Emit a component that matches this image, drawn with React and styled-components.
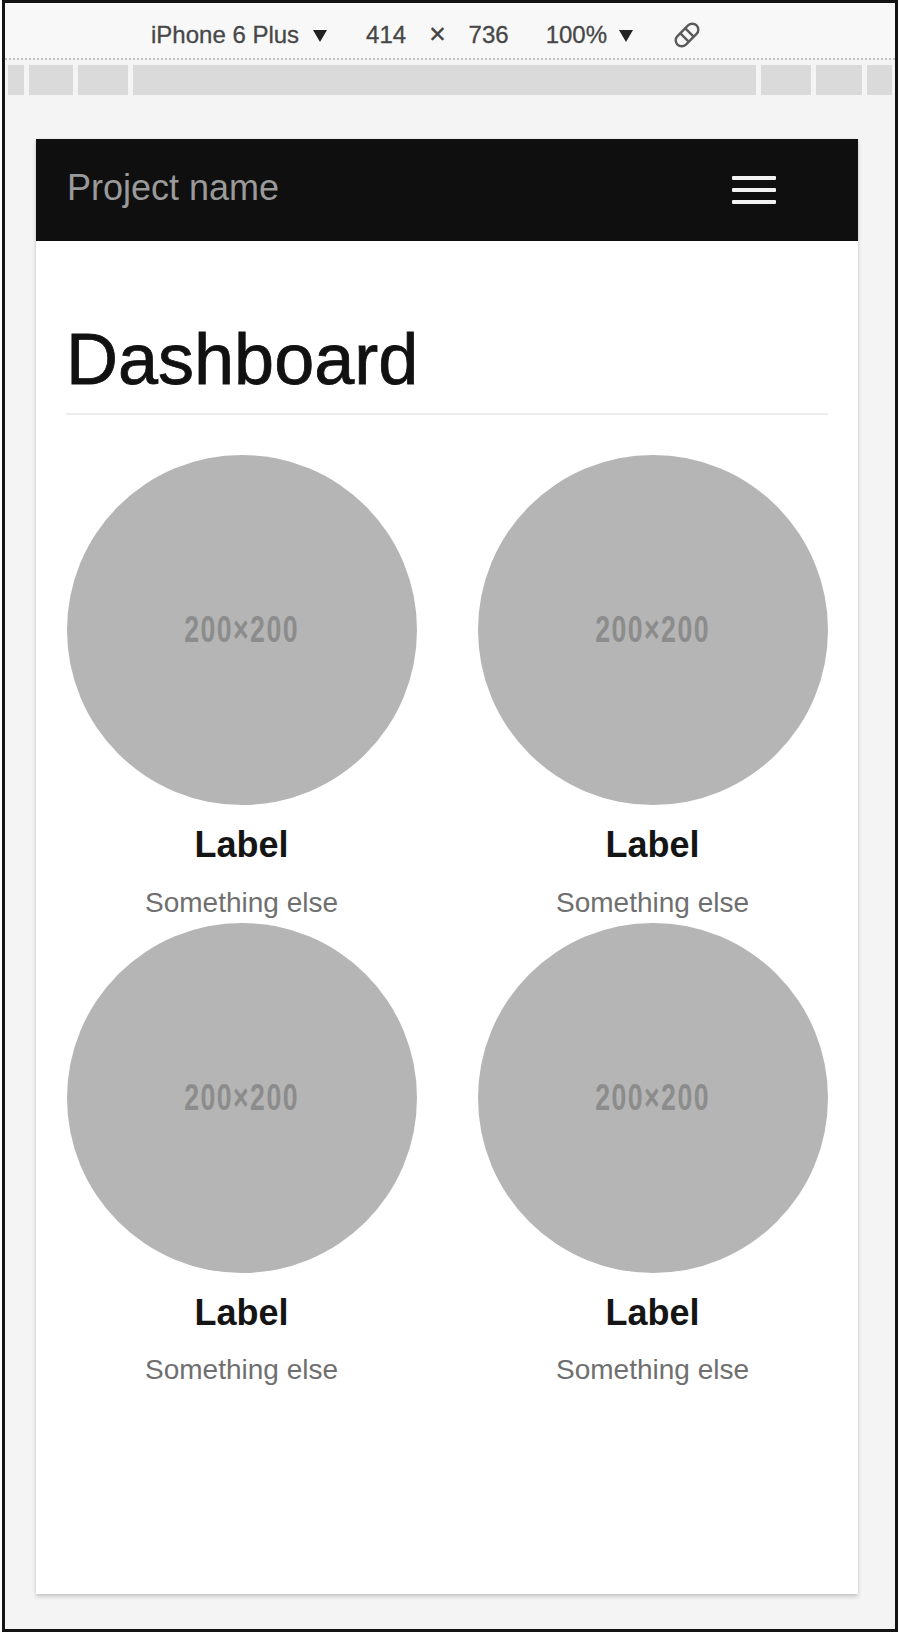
import React from 'react'
import styled, { createGlobalStyle } from 'styled-components'

const GlobalStyle = createGlobalStyle`
  html, body {
    margin: 0;
    padding: 0;
    background: #fff;
  }
  body {
    font-family: "Liberation Sans", Arial, sans-serif;
  }
`

/* outer screenshot frame */
const Frame = styled.div`
  margin-left: 2px;
  width: 896px;
  height: 1632px;
  box-sizing: border-box;
  border: 3px solid #141414;
  background: #f4f4f4;
  display: flex;
  flex-direction: column;
`

/* device toolbar */
const Toolbar = styled.div`
  height: 57px;
  flex: 0 0 57px;
  box-sizing: border-box;
  padding: 9px 0 0 146px;
  display: flex;
  align-items: center;
  border-bottom: 2px dotted #c2c2c2;
  background: #f8f8f8;
  font-size: 24px;
  line-height: 28px;
  color: #474747;
  -webkit-text-stroke: 0.3px #474747;
`

const ToolItem = styled.span`
  margin-left: ${(p) => p.$gap || 0}px;
  display: inline-flex;
  align-items: center;
  white-space: nowrap;
`

const Caret = styled.span`
  margin-left: ${(p) => p.$gap || 0}px;
  width: 0;
  height: 0;
  border-left: 7px solid transparent;
  border-right: 7px solid transparent;
  border-top: 12px solid #222;
  margin-top: 2px;
`

const Times = styled.span`
  margin-left: ${(p) => p.$gap || 0}px;
  font-family: "DejaVu Sans", sans-serif;
  font-size: 22px;
  color: #444;
`

const Ruler = styled.div`
  margin-top: 5px;
  height: 30px;
  flex: 0 0 30px;
  padding: 0 3px;
  display: flex;
  gap: 5px;
`

const RulerCell = styled.div`
  background: #dadada;
  flex: ${(p) => (p.$grow ? '1' : `0 0 ${p.$w}px`)};
`

const Viewport = styled.div`
  flex: 1;
  padding: 44px 0 0 31px;
`

/* the emulated phone page */
const Panel = styled.div`
  width: 822px;
  height: 1455px;
  background: #fff;
  box-shadow: 0 3px 4px rgba(0, 0, 0, 0.16), 0 0 3px rgba(0, 0, 0, 0.08);
  display: flex;
  flex-direction: column;
`

const Navbar = styled.nav`
  height: 102px;
  flex: 0 0 102px;
  background: #0f0f0f;
  display: flex;
  align-items: center;
  justify-content: space-between;
  padding: 0 82px 0 31px;
`

const Brand = styled.span`
  font-size: 36px;
  line-height: 40px;
  color: #9a9a9a;
  margin-bottom: 5px;
`

const Burger = styled.div`
  display: flex;
  flex-direction: column;
  gap: 8px;
`

const Bar = styled.span`
  display: block;
  width: 44px;
  height: 4px;
  border-radius: 1px;
  background: #f2f2f2;
`

const Main = styled.main`
  padding: 0 30px;
`

const Heading = styled.h1`
  margin: 79px 0 40px;
  padding-bottom: 14px;
  border-bottom: 2px solid #ececec;
  font-size: 72px;
  line-height: 79px;
  font-weight: 400;
  color: #111;
  -webkit-text-stroke: 0.8px #111;
`

const Grid = styled.div`
  display: grid;
  grid-template-columns: 351px 351px;
  column-gap: 60px;
`

const Item = styled.div`
  display: flex;
  flex-direction: column;
  align-items: center;
  text-align: center;
`

const Circle = styled.div`
  width: 350px;
  height: 350px;
  border-radius: 50%;
  background: #b5b5b5;
  display: flex;
  align-items: center;
  justify-content: center;
`

const SizeText = styled.span`
  display: inline-block;
  font-size: 36px;
  font-weight: 700;
  letter-spacing: 2px;
  color: #8c8c8c;
  transform: scaleX(0.74);
`

const Label = styled.h4`
  margin: 20px 0 18px;
  font-size: 36px;
  line-height: 39.6px;
  font-weight: 700;
  color: #151515;
`

const Sub = styled.span`
  font-size: 28px;
  line-height: 40px;
  color: #6f6f6f;
`

const RotateIcon = () => (
  <svg width="30" height="30" viewBox="0 0 30 30">
    <g transform="rotate(45 15 15)" fill="none" stroke="#5a5a5a" strokeWidth="2.4" strokeLinecap="round">
      <rect x="9" y="1.5" width="12" height="27" rx="6" />
      <path d="M9.5 11.5 L20.5 11.5 M9.5 18.5 L20.5 18.5" />
    </g>
  </svg>
)

const items = [1, 2, 3, 4]

export default function App() {
  return (
    <>
      <GlobalStyle />
      <Frame>
        <Toolbar>
          <ToolItem>iPhone 6 Plus</ToolItem>
          <Caret $gap={14} />
          <ToolItem $gap={39}>414</ToolItem>
          <Times $gap={22}>✕</Times>
          <ToolItem $gap={22}>736</ToolItem>
          <ToolItem $gap={37}>100%</ToolItem>
          <Caret $gap={12} />
          <ToolItem $gap={39}>
            <RotateIcon />
          </ToolItem>
        </Toolbar>
        <Ruler>
          <RulerCell $w={16} />
          <RulerCell $w={44} />
          <RulerCell $w={50} />
          <RulerCell $grow />
          <RulerCell $w={50} />
          <RulerCell $w={46} />
          <RulerCell $w={25} />
        </Ruler>
        <Viewport>
          <Panel>
            <Navbar>
              <Brand>Project name</Brand>
              <Burger>
                <Bar />
                <Bar />
                <Bar />
              </Burger>
            </Navbar>
            <Main>
              <Heading>Dashboard</Heading>
              <Grid>
                {items.map((i) => (
                  <Item key={i}>
                    <Circle>
                      <SizeText>200×200</SizeText>
                    </Circle>
                    <Label>Label</Label>
                    <Sub>Something else</Sub>
                  </Item>
                ))}
              </Grid>
            </Main>
          </Panel>
        </Viewport>
      </Frame>
    </>
  )
}
